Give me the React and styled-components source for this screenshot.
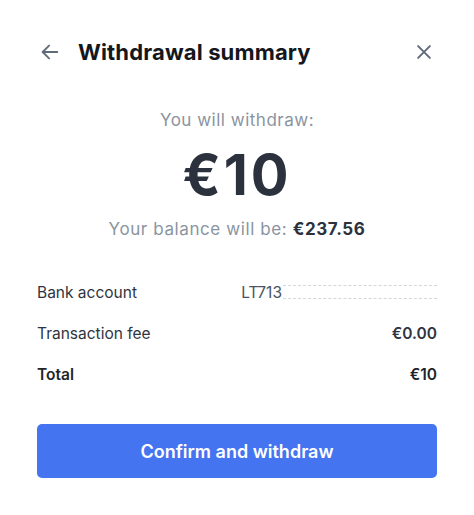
import React from "react";
import styled, { createGlobalStyle } from "styled-components";

const Global = createGlobalStyle`
  html, body { margin: 0; padding: 0; background: #ffffff; }
  body { font-family: Inter, "Noto Sans", sans-serif; -webkit-font-smoothing: antialiased; }
  * { box-sizing: border-box; }
`;

const Page = styled.div`
  width: 474px;
  height: 515px;
  background: #fff;
  display: flex;
  flex-direction: column;
  padding: 0 37px;
`;

const Header = styled.header`
  height: 104px;
  display: flex;
  align-items: center;
  padding: 0 4px 0 2px;
`;

const IconButton = styled.button`
  border: 0;
  background: none;
  padding: 0;
  display: flex;
  align-items: center;
  justify-content: center;
  color: #5f6b7a;
  cursor: pointer;
`;

const Title = styled.h1`
  margin: 0 0 0 17px;
  flex: 1;
  font-size: 22px;
  font-weight: 700;
  color: #14171c;
  letter-spacing: 0.15px;
`;

const Summary = styled.section`
  margin-top: 4px;
  display: flex;
  flex-direction: column;
  align-items: center;
`;

const Caption = styled.p`
  margin: ${(p) => (p.$gap ? "10px 0 0" : "0")};
  font-size: 17px;
  line-height: 24px;
  color: #8a94a1;
  letter-spacing: ${(p) => (p.$gap ? "0.6px" : "0.5px")};
`;

const Amount = styled.div`
  margin-top: 11px;
  font-size: 56px;
  line-height: 64px;
  font-weight: 700;
  color: #2b323d;
  letter-spacing: 3px;
`;

const Strong = styled.span`
  font-weight: 700;
  color: #2b323d;
`;

const Details = styled.dl`
  margin: 39px 0 0;
  display: flex;
  flex-direction: column;
  gap: 17px;
`;

const Row = styled.div`
  display: flex;
  justify-content: space-between;
  align-items: center;
  height: 24px;
  font-size: 15.5px;
  color: ${(p) => (p.$bold ? "#1f242b" : "#2f3540")};
  font-weight: ${(p) => (p.$bold ? 600 : 400)};
`;

const Label = styled.dt`
  margin: 0;
`;

const Value = styled.dd`
  margin: 0;
  font-weight: ${(p) => (p.$bold ? 600 : "inherit")};
  display: flex;
  align-items: center;
  color: ${(p) => (p.$muted ? "#4a525d" : "inherit")};
`;

const Masked = styled.span`
  width: 154px;
  height: 14px;
  margin-left: 1px;
  display: flex;
  flex-direction: column;
  justify-content: space-between;
  &::before, &::after {
    content: "";
    display: block;
    border-top: 1px dashed #d3d7dc;
  }
`;

const Button = styled.button`
  margin-top: 38px;
  height: 54px;
  width: 100%;
  border: 0;
  border-radius: 5px;
  background: #4474f0;
  color: #fff;
  font-family: inherit;
  font-size: 18px;
  font-weight: 600;
  cursor: pointer;
`;

export default function App() {
  return (
    <>
      <Global />
      <Page>
        <Header>
          <IconButton aria-label="Back">
            <svg width="22" height="22" viewBox="0 0 24 24" fill="none" stroke="currentColor" strokeWidth="2" strokeLinecap="round" strokeLinejoin="round">
              <path d="M20 12H4" />
              <path d="M11 5l-7 7 7 7" />
            </svg>
          </IconButton>
          <Title>Withdrawal summary</Title>
          <IconButton aria-label="Close">
            <svg width="18" height="18" viewBox="0 0 20 20" fill="none" stroke="currentColor" strokeWidth="2.2" strokeLinecap="round">
              <path d="M3.5 3.5l13 13M16.5 3.5l-13 13" />
            </svg>
          </IconButton>
        </Header>
        <Summary>
          <Caption>You will withdraw:</Caption>
          <Amount>€10</Amount>
          <Caption $gap>
            Your balance will be: <Strong>€237.56</Strong>
          </Caption>
        </Summary>
        <Details>
          <Row>
            <Label>Bank account</Label>
            <Value $muted>
              LT713<Masked />
            </Value>
          </Row>
          <Row>
            <Label>Transaction fee</Label>
            <Value $bold>€0.00</Value>
          </Row>
          <Row $bold>
            <Label>Total</Label>
            <Value>€10</Value>
          </Row>
        </Details>
        <Button>Confirm and withdraw</Button>
      </Page>
    </>
  );
}
